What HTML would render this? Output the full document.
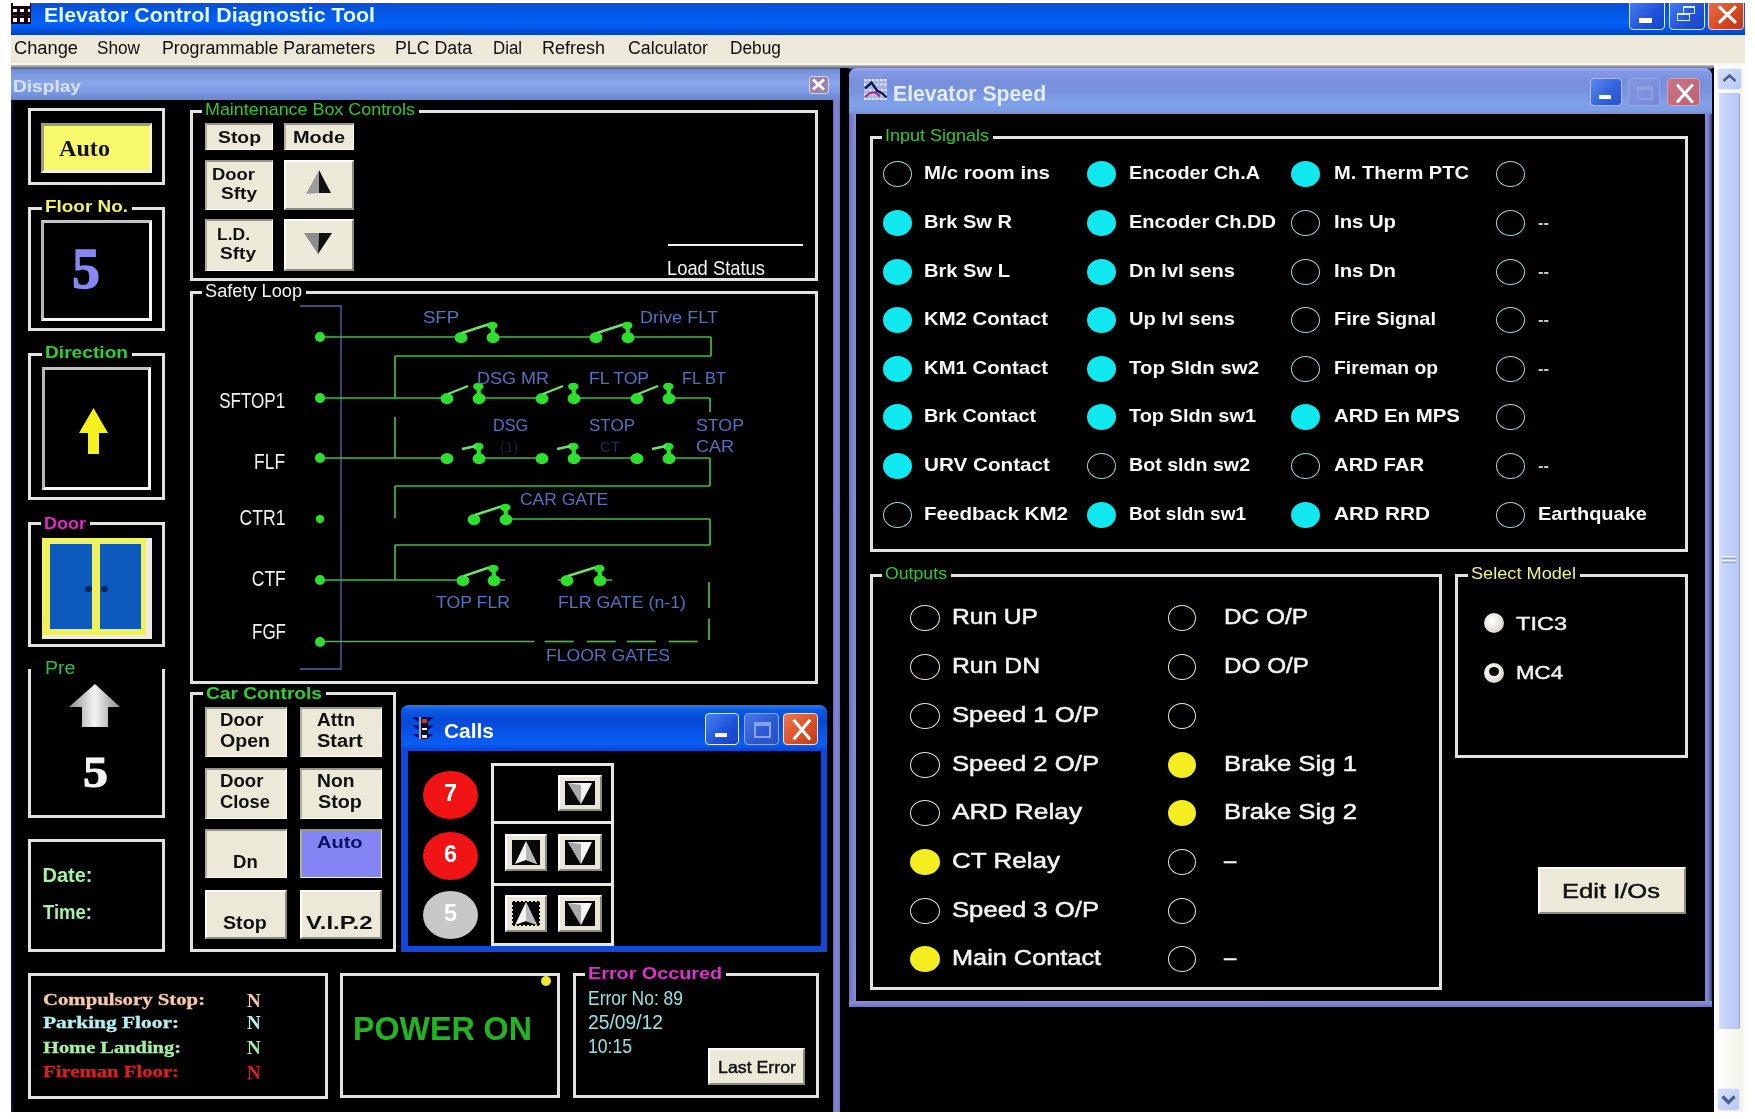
<!DOCTYPE html>
<html><head><meta charset="utf-8"><title>Elevator Control Diagnostic Tool</title>
<style>
html,body{margin:0;padding:0;background:#fff;}
body{width:1755px;height:1119px;position:relative;overflow:hidden;font-family:"Liberation Sans",sans-serif;}
#root{position:absolute;left:0;top:0;width:1755px;height:1119px;overflow:hidden;filter:blur(0.6px);}
#root div{position:absolute;}
.t{white-space:nowrap;}
</style></head><body><div id="root">
<div style="left:11px;top:3px;width:1734px;height:32px;background:linear-gradient(#0a50d4 0%,#0656e2 28%,#0362f8 62%,#0452e0 84%,#033eb8 100%);"></div>
<div style="left:11px;top:3px;width:20px;height:21px;background:#14040a;"></div>
<div style="left:13px;top:3px;width:17px;height:3px;background:#fff;"></div>
<div style="left:13.2px;top:8.5px;width:3.6px;height:3.8px;background:#f6f2f4;"></div>
<div style="left:20.3px;top:8.5px;width:3.8px;height:3.8px;background:#f6f2f4;"></div>
<div style="left:27.6px;top:8.5px;width:2.6px;height:3.8px;background:#f6f2f4;"></div>
<div style="left:13.2px;top:18px;width:3.6px;height:3.8px;background:#f6f2f4;"></div>
<div style="left:20.3px;top:18px;width:3.8px;height:3.8px;background:#f6f2f4;"></div>
<div style="left:27.6px;top:18px;width:2.6px;height:3.8px;background:#f6f2f4;"></div>
<div style="left:13.2px;top:14.6px;width:3.6px;height:1px;background:#4a3040;"></div>
<div style="left:20.3px;top:14.6px;width:3.8px;height:1px;background:#4a3040;"></div>
<div style="left:27.6px;top:14.6px;width:2.6px;height:1px;background:#4a3040;"></div>
<div class="t" style="left:44px;top:3.0px;font:700 20px/24px 'Liberation Sans',sans-serif;color:#e2fbfb;transform:scaleX(1.069);transform-origin:left center;">Elevator Control Diagnostic Tool</div>
<div style="left:1629px;top:0px;width:36px;height:30px;background:linear-gradient(135deg,#4a7ef0,#1e52d8 60%,#1846c0);border:1.5px solid #d8f0f8;border-radius:4px;box-sizing:border-box;opacity:1;overflow:hidden;"><div style="left:9.0px;top:17.4px;width:13.0px;height:4.2px;background:#fff;"></div></div>
<div style="left:1669px;top:0px;width:36px;height:30px;background:linear-gradient(135deg,#4a7ef0,#1e52d8 60%,#1846c0);border:1.5px solid #d8f0f8;border-radius:4px;box-sizing:border-box;opacity:1;overflow:hidden;"><div style="left:12.6px;top:5px;width:12px;height:7.5px;box-sizing:border-box;border:1.8px solid #d8f4f8;border-top-width:2.6px;"></div><div style="left:7.3px;top:11.5px;width:12.7px;height:8.5px;box-sizing:border-box;border:1.8px solid #d8f4f8;border-top-width:2.6px;"></div></div>
<div style="left:1708px;top:0px;width:36px;height:30px;background:linear-gradient(135deg,#e8704a,#d84a20 55%,#b83a18);border:1.5px solid #f4d8d0;border-radius:4px;box-sizing:border-box;opacity:1;overflow:hidden;"><svg style="position:absolute;left:0;top:0" width="36" height="30" viewBox="0 0 36 30"><path d="M9.7 5.4 L27.0 21.9 M27.0 5.4 L9.7 21.9" stroke="#fff" stroke-width="3.2" stroke-linecap="butt"/></svg></div>
<div style="left:0px;top:0px;width:1755px;height:3px;background:#fff;"></div>
<div style="left:11px;top:35px;width:1734px;height:29px;background:#ece9d8;"></div>
<div style="left:11px;top:63px;width:1734px;height:2px;background:#f8f6ee;"></div>
<div style="left:11px;top:65px;width:1703px;height:3px;background:linear-gradient(#c8c4b0,#6a6f86);"></div>
<div class="t" style="left:14px;top:37.0px;font:400 18px/22px 'Liberation Sans',sans-serif;color:#101010;transform:scaleX(1.015);transform-origin:left center;">Change</div>
<div class="t" style="left:97px;top:37.0px;font:400 18px/22px 'Liberation Sans',sans-serif;color:#101010;transform:scaleX(0.955);transform-origin:left center;">Show</div>
<div class="t" style="left:162px;top:37.0px;font:400 18px/22px 'Liberation Sans',sans-serif;color:#101010;transform:scaleX(0.986);transform-origin:left center;">Programmable Parameters</div>
<div class="t" style="left:395px;top:37.0px;font:400 18px/22px 'Liberation Sans',sans-serif;color:#101010;transform:scaleX(0.987);transform-origin:left center;">PLC Data</div>
<div class="t" style="left:493px;top:37.0px;font:400 18px/22px 'Liberation Sans',sans-serif;color:#101010;transform:scaleX(0.935);transform-origin:left center;">Dial</div>
<div class="t" style="left:542px;top:37.0px;font:400 18px/22px 'Liberation Sans',sans-serif;color:#101010;transform:scaleX(1.000);transform-origin:left center;">Refresh</div>
<div class="t" style="left:628px;top:37.0px;font:400 18px/22px 'Liberation Sans',sans-serif;color:#101010;transform:scaleX(0.987);transform-origin:left center;">Calculator</div>
<div class="t" style="left:730px;top:37.0px;font:400 18px/22px 'Liberation Sans',sans-serif;color:#101010;transform:scaleX(0.961);transform-origin:left center;">Debug</div>
<div style="left:11px;top:68px;width:1703px;height:1044px;background:#000;"></div>
<div style="left:1714px;top:66px;width:31px;height:1046px;background:#fbfaf4;"></div>
<div style="left:1715px;top:68px;width:28px;height:1044px;background:linear-gradient(90deg,#fefefe,#f3f1e8);"></div>
<div style="left:1717px;top:93px;width:23px;height:936px;background:linear-gradient(90deg,#d4defa,#c0d0f8 40%,#b8c8f4);border-left:2px solid #f4f7ff;border-right:1px solid #98a8d8;box-sizing:border-box;border-radius:2px;"></div>
<div style="left:1722px;top:556px;width:14px;height:1px;background:#eef4ff;"></div>
<div style="left:1722px;top:558px;width:14px;height:1px;background:#8ea4d8;"></div>
<div style="left:1722px;top:560px;width:14px;height:1px;background:#eef4ff;"></div>
<div style="left:1722px;top:562px;width:14px;height:1px;background:#8ea4d8;"></div>
<div style="left:1717px;top:68px;width:25px;height:22px;background:linear-gradient(135deg,#d6e0fa,#b8c8f4);border-radius:3px;border:1px solid #e8eefc;box-sizing:border-box;"><svg style="position:absolute;left:0;top:0" width="23" height="20"><path d="M5.5 12 L11.5 6.5 L17.5 12" stroke="#4a5f98" stroke-width="2.6" fill="none"/></svg></div>
<div style="left:1717px;top:1088px;width:23px;height:23px;background:linear-gradient(135deg,#d6e0fa,#b8c8f4);border-radius:3px;border:1px solid #e8eefc;box-sizing:border-box;"><svg style="position:absolute;left:0;top:0" width="21" height="21"><path d="M4.5 7.5 L10.5 13.5 L16.5 7.5" stroke="#4a5f98" stroke-width="3.2" fill="none"/></svg></div>
<div style="left:11px;top:68px;width:829px;height:32px;background:linear-gradient(#6f89d6 0%,#7e9be2 25%,#8aa6ea 50%,#7b98e0 75%,#6a84d2 100%);"></div>
<div style="left:11px;top:68px;width:1703px;height:1px;background:#5b648c;"></div>
<div class="t" style="left:13px;top:75.5px;font:700 17px/21px 'Liberation Sans',sans-serif;color:#d4e2fa;transform:scaleX(1.124);transform-origin:left center;">Display</div>
<div style="left:809px;top:76px;width:20px;height:18px;border:1.5px solid #d4d4f8;box-sizing:border-box;border-radius:3px;background:#9a84a8;"><svg style="position:absolute;left:0;top:0" width="17" height="15"><path d="M3 2.5 L14 12.5 M14 2.5 L3 12.5" stroke="#fdf4fb" stroke-width="3"/></svg></div>
<div style="left:833px;top:100px;width:7px;height:1012px;background:linear-gradient(90deg,#6a70b8,#8088d4 50%,#6c74c0);"></div>
<div style="left:11px;top:100px;width:2px;height:1012px;background:#0a1048;"></div>
<div style="left:840px;top:68px;width:9px;height:1044px;background:#000;"></div>
<div style="left:28px;top:108px;width:137px;height:77px;border:3px solid;border-color:#e2e2e2;box-sizing:border-box;"></div>
<div style="left:41px;top:123px;width:111px;height:50px;background:#f8f86c;border:3px solid #9c9c74;border-right-color:#f4f4c8;border-bottom-color:#f4f4c8;box-sizing:border-box;"></div>
<div class="t" style="left:59px;top:134.5px;font:700 23px/27px 'Liberation Serif',serif;color:#141420;transform:scaleX(1.050);transform-origin:left center;">Auto</div>
<div style="left:28px;top:207px;width:137px;height:124px;border:3px solid;border-color:#e2e2e2;box-sizing:border-box;"></div>
<div style="left:42px;top:204px;width:90px;height:8px;background:#000;"></div>
<div class="t" style="left:45px;top:195.5px;font:700 17px/21px 'Liberation Sans',sans-serif;color:#f4f45c;transform:scaleX(1.113);transform-origin:left center;">Floor No.</div>
<div style="left:41px;top:220px;width:111px;height:101px;border:3px solid;border-color:#c2c2c2 #f6f6f6 #f6f6f6 #b8b8b8;box-sizing:border-box;"></div>
<div class="t" style="left:71.5px;top:238.0px;font:700 58px/62px 'Liberation Serif',serif;color:#8888f2;transform:scaleX(0.966);transform-origin:left center;-webkit-text-stroke:1.3px #8888f2;">5</div>
<div style="left:28px;top:353px;width:137px;height:147px;border:3px solid;border-color:#e2e2e2;box-sizing:border-box;"></div>
<div style="left:42px;top:350px;width:90px;height:8px;background:#000;"></div>
<div class="t" style="left:45px;top:341.5px;font:700 17px/21px 'Liberation Sans',sans-serif;color:#2ed02e;transform:scaleX(1.127);transform-origin:left center;">Direction</div>
<div style="left:42px;top:367px;width:109px;height:123px;border:3px solid;border-color:#c2c2c2 #f6f6f6 #f6f6f6 #b8b8b8;box-sizing:border-box;"></div>
<svg style="position:absolute;left:70px;top:400px" width="50" height="62"><path d="M23.5 8 L38 33 L29 33 L29 54 L18 54 L18 33 L9 33 Z" fill="#f4f020"/></svg>
<div style="left:28px;top:522px;width:137px;height:125px;border:3px solid;border-color:#e2e2e2;box-sizing:border-box;"></div>
<div style="left:41px;top:519px;width:49px;height:8px;background:#000;"></div>
<div class="t" style="left:44px;top:512.5px;font:700 17px/21px 'Liberation Sans',sans-serif;color:#e428c4;transform:scaleX(1.059);transform-origin:left center;">Door</div>
<div style="left:42px;top:537.5px;width:109.5px;height:101.5px;background:#ecece4;"></div>
<div style="left:42px;top:537.5px;width:104px;height:97.5px;background:#f0f05c;"></div>
<div style="left:50.2px;top:544.2px;width:41.5px;height:85px;background:#0c5abc;"></div>
<div style="left:100.4px;top:544.2px;width:41px;height:85px;background:#0c5abc;"></div>
<div style="left:85px;top:585.5px;width:6.5px;height:6px;background:#082458;border-radius:50%;"></div>
<div style="left:101px;top:585.5px;width:6.5px;height:6px;background:#082458;border-radius:50%;"></div>
<div style="left:28px;top:669px;width:137px;height:149px;border:3px solid;border-color:#e2e2e2;box-sizing:border-box;border-top-color:transparent;"></div>
<div style="left:28px;top:660px;width:138px;height:12px;background:#000;"></div>
<div style="left:28px;top:669px;width:3px;height:4px;background:#e4e4e4;"></div>
<div style="left:162px;top:669px;width:3px;height:4px;background:#e4e4e4;"></div>
<div class="t" style="left:45px;top:657.0px;font:400 18px/22px 'Liberation Sans',sans-serif;color:#3cb83c;transform:scaleX(1.089);transform-origin:left center;">Pre</div>
<svg style="position:absolute;left:64px;top:680px" width="62" height="52"><defs><linearGradient id="ga" x1="0" x2="1"><stop offset="0" stop-color="#8c8c8c"/><stop offset="0.5" stop-color="#f4f4f4"/><stop offset="1" stop-color="#8c8c8c"/></linearGradient></defs><path d="M31 4 L56 27 L44 27 L44 47 L18 47 L18 27 L5 27 Z" fill="url(#ga)"/></svg>
<div class="t" style="left:83px;top:747.5px;font:700 45px/49px 'Liberation Serif',serif;color:#f4f4f4;transform:scaleX(1.111);transform-origin:left center;-webkit-text-stroke:1px #f4f4f4;">5</div>
<div style="left:28px;top:839px;width:137px;height:113px;border:3px solid;border-color:#e2e2e2;box-sizing:border-box;"></div>
<div class="t" style="left:42.5px;top:862.5px;font:700 20px/24px 'Liberation Sans',sans-serif;color:#a4f0a4;transform:scaleX(1.000);transform-origin:left center;">Date:</div>
<div class="t" style="left:42.5px;top:899.5px;font:700 20px/24px 'Liberation Sans',sans-serif;color:#a4f0a4;transform:scaleX(0.925);transform-origin:left center;">Time:</div>
<div style="left:190px;top:110px;width:628px;height:171px;border:3px solid;border-color:#e2e2e2;box-sizing:border-box;"></div>
<div style="left:202px;top:107px;width:217px;height:8px;background:#000;"></div>
<div class="t" style="left:205px;top:98.5px;font:400 17px/21px 'Liberation Sans',sans-serif;color:#30c830;transform:scaleX(1.053);transform-origin:left center;">Maintenance Box Controls</div>
<div style="left:205px;top:123px;width:68px;height:27px;background:#ece9d8;border-top:2px solid #96948a;border-left:2px solid #b0ae9e;border-right:1px solid #fbfbf2;border-bottom:1px solid #fbfbf2;box-sizing:border-box;"></div>
<div class="t" style="left:217.5px;top:126.5px;font:700 17px/21px 'Liberation Sans',sans-serif;color:#101010;transform:scaleX(1.139);transform-origin:left center;">Stop</div>
<div style="left:284px;top:123px;width:70px;height:27px;background:#ece9d8;border-top:2px solid #96948a;border-left:2px solid #b0ae9e;border-right:1px solid #fbfbf2;border-bottom:1px solid #fbfbf2;box-sizing:border-box;"></div>
<div class="t" style="left:293.0px;top:126.5px;font:700 17px/21px 'Liberation Sans',sans-serif;color:#101010;transform:scaleX(1.172);transform-origin:left center;">Mode</div>
<div style="left:205px;top:160px;width:68px;height:50px;background:#ece9d8;border-top:2px solid #96948a;border-left:2px solid #b0ae9e;border-right:1px solid #fbfbf2;border-bottom:1px solid #fbfbf2;box-sizing:border-box;"></div>
<div class="t" style="left:212px;top:163.5px;font:700 17px/21px 'Liberation Sans',sans-serif;color:#101010;transform:scaleX(1.084);transform-origin:left center;">Door</div>
<div class="t" style="left:220.5px;top:182.5px;font:700 17px/21px 'Liberation Sans',sans-serif;color:#101010;transform:scaleX(1.121);transform-origin:left center;">Sfty</div>
<div style="left:284px;top:160px;width:70px;height:50px;background:#ece9d8;border-top:2px solid #fdfdf6;border-left:2px solid #fdfdf6;border-right:2px solid #8c8a7c;border-bottom:2px solid #8c8a7c;box-sizing:border-box;"></div>
<div style="left:205px;top:219px;width:68px;height:52px;background:#ece9d8;border-top:2px solid #96948a;border-left:2px solid #b0ae9e;border-right:1px solid #fbfbf2;border-bottom:1px solid #fbfbf2;box-sizing:border-box;"></div>
<div class="t" style="left:217px;top:223.5px;font:700 17px/21px 'Liberation Sans',sans-serif;color:#101010;transform:scaleX(1.028);transform-origin:left center;">L.D.</div>
<div class="t" style="left:220px;top:242.5px;font:700 17px/21px 'Liberation Sans',sans-serif;color:#101010;transform:scaleX(1.121);transform-origin:left center;">Sfty</div>
<div style="left:284px;top:219px;width:70px;height:52px;background:#ece9d8;border-top:2px solid #fdfdf6;border-left:2px solid #fdfdf6;border-right:2px solid #8c8a7c;border-bottom:2px solid #8c8a7c;box-sizing:border-box;"></div>
<svg style="position:absolute;left:300px;top:166px" width="40" height="40"><path d="M19 4 L6 28 L19 27 Z" fill="#9c9c9c"/><path d="M19 4 L31 27 L19 27 Z" fill="#101010"/></svg>
<svg style="position:absolute;left:300px;top:228px" width="40" height="40"><path d="M4 5 L19 5 L18 26 Z" fill="#8c8c8c"/><path d="M19 5 L32 5 L18 26 Z" fill="#101010"/></svg>
<div style="left:668px;top:244px;width:135px;height:2px;background:#f0f0f0;"></div>
<div class="t" style="left:667.4px;top:255.0px;font:400 21px/25px 'Liberation Sans',sans-serif;color:#f4f4f4;transform:scaleX(0.874);transform-origin:left center;">Load Status</div>
<div style="left:190px;top:291px;width:628px;height:393px;border:3px solid;border-color:#e2e2e2;box-sizing:border-box;"></div>
<div style="left:202px;top:288px;width:104px;height:8px;background:#000;"></div>
<div class="t" style="left:205px;top:280.0px;font:400 18px/22px 'Liberation Sans',sans-serif;color:#f4f4f4;transform:scaleX(1.010);transform-origin:left center;">Safety Loop</div>
<svg style="position:absolute;left:0;top:0" width="1755" height="1119"><path d="M300 306 L341 306 L341 669 L300 669" stroke="#5068a8" stroke-width="1.3" fill="none"/><path d="M320 337 L711 337" stroke="#40bc40" stroke-width="1.7" fill="none"/><path d="M711 337 L711 356" stroke="#40bc40" stroke-width="1.7" fill="none"/><path d="M395 356 L711 356" stroke="#40bc40" stroke-width="1.7" fill="none"/><path d="M395 356 L395 398" stroke="#40bc40" stroke-width="1.7" fill="none"/><path d="M320 398 L710 398" stroke="#40bc40" stroke-width="1.7" fill="none"/><path d="M710 398 L710 412" stroke="#40bc40" stroke-width="1.7" fill="none"/><path d="M395 417 L395 458" stroke="#40bc40" stroke-width="1.7" fill="none"/><path d="M320 458 L710 458" stroke="#40bc40" stroke-width="1.7" fill="none"/><path d="M710 458 L710 486" stroke="#40bc40" stroke-width="1.7" fill="none"/><path d="M395 486 L710 486" stroke="#40bc40" stroke-width="1.7" fill="none"/><path d="M395 486 L395 518" stroke="#40bc40" stroke-width="1.7" fill="none"/><path d="M507 519 L710 519" stroke="#40bc40" stroke-width="1.7" fill="none"/><path d="M710 519 L710 545" stroke="#40bc40" stroke-width="1.7" fill="none"/><path d="M395 545 L710 545" stroke="#40bc40" stroke-width="1.7" fill="none"/><path d="M395 545 L395 580" stroke="#40bc40" stroke-width="1.7" fill="none"/><path d="M320 580 L505 580" stroke="#40bc40" stroke-width="1.7" fill="none"/><path d="M558 580 L612 580" stroke="#40bc40" stroke-width="1.7" fill="none"/><path d="M709 582 L709 608" stroke="#40bc40" stroke-width="1.7" fill="none"/><path d="M709 618.5 L709 640" stroke="#40bc40" stroke-width="1.7" fill="none"/><path d="M320 641.5 L534.5 641.5" stroke="#40bc40" stroke-width="1.7" fill="none"/><path d="M544.6 641.5 L573.6 641.5" stroke="#40bc40" stroke-width="1.7" fill="none"/><path d="M586.7 641.5 L615.7 641.5" stroke="#40bc40" stroke-width="1.7" fill="none"/><path d="M626.7 641.5 L655.7 641.5" stroke="#40bc40" stroke-width="1.7" fill="none"/><path d="M668.7 641.5 L697.7 641.5" stroke="#40bc40" stroke-width="1.7" fill="none"/><circle cx="320" cy="337" r="5" fill="#2ee02e"/><circle cx="320" cy="398" r="5" fill="#2ee02e"/><circle cx="320" cy="458" r="5" fill="#2ee02e"/><circle cx="320" cy="519" r="4" fill="#2ee02e"/><circle cx="320" cy="580" r="5" fill="#2ee02e"/><circle cx="320" cy="642" r="5" fill="#2ee02e"/><path d="M466 337 L488 337" stroke="#000" stroke-width="3.4"/><ellipse cx="461" cy="337.6" rx="6.4" ry="5.6" fill="#2ee02e"/><ellipse cx="493" cy="337.6" rx="6.4" ry="5.6" fill="#2ee02e"/><ellipse cx="492.3" cy="325.5" rx="5.2" ry="3.8" fill="#2ee02e"/><path d="M492.5 327 L493 335" stroke="#2ee02e" stroke-width="4.2"/><path d="M462 333 L488 324.5" stroke="#6ee06e" stroke-width="2.4" fill="none"/><path d="M601 337 L623 337" stroke="#000" stroke-width="3.4"/><ellipse cx="596" cy="337.6" rx="6.4" ry="5.6" fill="#2ee02e"/><ellipse cx="628" cy="337.6" rx="6.4" ry="5.6" fill="#2ee02e"/><ellipse cx="627.3" cy="325.5" rx="5.2" ry="3.8" fill="#2ee02e"/><path d="M627.5 327 L628 335" stroke="#2ee02e" stroke-width="4.2"/><path d="M597 333 L623 324.5" stroke="#6ee06e" stroke-width="2.4" fill="none"/><path d="M452 398 L474 398" stroke="#000" stroke-width="3.4"/><ellipse cx="447" cy="398.6" rx="6.4" ry="5.6" fill="#2ee02e"/><ellipse cx="479" cy="398.6" rx="6.4" ry="5.6" fill="#2ee02e"/><ellipse cx="478.3" cy="386.5" rx="5.2" ry="3.8" fill="#2ee02e"/><path d="M478.5 388 L479 396" stroke="#2ee02e" stroke-width="4.2"/><path d="M448 394 L468 386" stroke="#6ee06e" stroke-width="2.4" fill="none"/><path d="M452 458 L474 458" stroke="#000" stroke-width="3.4"/><ellipse cx="447" cy="458.6" rx="6.4" ry="5.6" fill="#2ee02e"/><ellipse cx="479" cy="458.6" rx="6.4" ry="5.6" fill="#2ee02e"/><ellipse cx="478.3" cy="446.5" rx="5.2" ry="3.8" fill="#2ee02e"/><path d="M478.5 448 L479 456" stroke="#2ee02e" stroke-width="4.2"/><path d="M462 449 L476 446" stroke="#6ee06e" stroke-width="2.4" fill="none"/><path d="M547 398 L569 398" stroke="#000" stroke-width="3.4"/><ellipse cx="542" cy="398.6" rx="6.4" ry="5.6" fill="#2ee02e"/><ellipse cx="574" cy="398.6" rx="6.4" ry="5.6" fill="#2ee02e"/><ellipse cx="573.3" cy="386.5" rx="5.2" ry="3.8" fill="#2ee02e"/><path d="M573.5 388 L574 396" stroke="#2ee02e" stroke-width="4.2"/><path d="M543 394 L563 386" stroke="#6ee06e" stroke-width="2.4" fill="none"/><path d="M547 458 L569 458" stroke="#000" stroke-width="3.4"/><ellipse cx="542" cy="458.6" rx="6.4" ry="5.6" fill="#2ee02e"/><ellipse cx="574" cy="458.6" rx="6.4" ry="5.6" fill="#2ee02e"/><ellipse cx="573.3" cy="446.5" rx="5.2" ry="3.8" fill="#2ee02e"/><path d="M573.5 448 L574 456" stroke="#2ee02e" stroke-width="4.2"/><path d="M557 449 L571 446" stroke="#6ee06e" stroke-width="2.4" fill="none"/><path d="M642 398 L664 398" stroke="#000" stroke-width="3.4"/><ellipse cx="637" cy="398.6" rx="6.4" ry="5.6" fill="#2ee02e"/><ellipse cx="669" cy="398.6" rx="6.4" ry="5.6" fill="#2ee02e"/><ellipse cx="668.3" cy="386.5" rx="5.2" ry="3.8" fill="#2ee02e"/><path d="M668.5 388 L669 396" stroke="#2ee02e" stroke-width="4.2"/><path d="M638 394 L658 386" stroke="#6ee06e" stroke-width="2.4" fill="none"/><path d="M642 458 L664 458" stroke="#000" stroke-width="3.4"/><ellipse cx="637" cy="458.6" rx="6.4" ry="5.6" fill="#2ee02e"/><ellipse cx="669" cy="458.6" rx="6.4" ry="5.6" fill="#2ee02e"/><ellipse cx="668.3" cy="446.5" rx="5.2" ry="3.8" fill="#2ee02e"/><path d="M668.5 448 L669 456" stroke="#2ee02e" stroke-width="4.2"/><path d="M652 449 L666 446" stroke="#6ee06e" stroke-width="2.4" fill="none"/><path d="M479 519 L501 519" stroke="#000" stroke-width="3.4"/><ellipse cx="474" cy="519.6" rx="6.4" ry="5.6" fill="#2ee02e"/><ellipse cx="506" cy="519.6" rx="6.4" ry="5.6" fill="#2ee02e"/><ellipse cx="505.3" cy="507.5" rx="5.2" ry="3.8" fill="#2ee02e"/><path d="M505.5 509 L506 517" stroke="#2ee02e" stroke-width="4.2"/><path d="M475 515 L501 506.5" stroke="#6ee06e" stroke-width="2.4" fill="none"/><path d="M468 580 L489 580" stroke="#000" stroke-width="3.4"/><ellipse cx="463" cy="580.6" rx="6.4" ry="5.6" fill="#2ee02e"/><ellipse cx="494" cy="580.6" rx="6.4" ry="5.6" fill="#2ee02e"/><ellipse cx="493.3" cy="568.5" rx="5.2" ry="3.8" fill="#2ee02e"/><path d="M493.5 570 L494 578" stroke="#2ee02e" stroke-width="4.2"/><path d="M464 576 L489 567.5" stroke="#6ee06e" stroke-width="2.4" fill="none"/><path d="M572 580 L595 580" stroke="#000" stroke-width="3.4"/><ellipse cx="567" cy="580.6" rx="6.4" ry="5.6" fill="#2ee02e"/><ellipse cx="600" cy="580.6" rx="6.4" ry="5.6" fill="#2ee02e"/><ellipse cx="599.3" cy="568.5" rx="5.2" ry="3.8" fill="#2ee02e"/><path d="M599.5 570 L600 578" stroke="#2ee02e" stroke-width="4.2"/><path d="M568 576 L595 567.5" stroke="#6ee06e" stroke-width="2.4" fill="none"/></svg>
<div class="t" style="right:1469.5px;top:388.0px;font:400 22px/26px 'Liberation Sans',sans-serif;color:#f0f0f0;transform:scaleX(0.775);transform-origin:right center;">SFTOP1</div>
<div class="t" style="right:1469.5px;top:448.5px;font:400 22px/26px 'Liberation Sans',sans-serif;color:#f0f0f0;transform:scaleX(0.793);transform-origin:right center;">FLF</div>
<div class="t" style="right:1469.5px;top:505.0px;font:400 22px/26px 'Liberation Sans',sans-serif;color:#f0f0f0;transform:scaleX(0.801);transform-origin:right center;">CTR1</div>
<div class="t" style="right:1469.5px;top:566.0px;font:400 22px/26px 'Liberation Sans',sans-serif;color:#f0f0f0;transform:scaleX(0.795);transform-origin:right center;">CTF</div>
<div class="t" style="right:1469.5px;top:619.0px;font:400 22px/26px 'Liberation Sans',sans-serif;color:#f0f0f0;transform:scaleX(0.773);transform-origin:right center;">FGF</div>
<div class="t" style="left:423px;top:306.5px;font:400 17px/21px 'Liberation Sans',sans-serif;color:#5272c2;transform:scaleX(1.089);transform-origin:left center;">SFP</div>
<div class="t" style="left:640px;top:306.5px;font:400 17px/21px 'Liberation Sans',sans-serif;color:#5272c2;transform:scaleX(1.063);transform-origin:left center;">Drive FLT</div>
<div class="t" style="left:477px;top:367.5px;font:400 17px/21px 'Liberation Sans',sans-serif;color:#5272c2;transform:scaleX(1.059);transform-origin:left center;">DSG MR</div>
<div class="t" style="left:589px;top:367.5px;font:400 17px/21px 'Liberation Sans',sans-serif;color:#5272c2;transform:scaleX(1.030);transform-origin:left center;">FL TOP</div>
<div class="t" style="left:682px;top:367.5px;font:400 17px/21px 'Liberation Sans',sans-serif;color:#5272c2;transform:scaleX(0.964);transform-origin:left center;">FL BT</div>
<div class="t" style="left:493px;top:414.5px;font:400 17px/21px 'Liberation Sans',sans-serif;color:#5272c2;transform:scaleX(0.950);transform-origin:left center;">DSG</div>
<div class="t" style="left:589px;top:414.5px;font:400 17px/21px 'Liberation Sans',sans-serif;color:#5272c2;transform:scaleX(1.000);transform-origin:left center;">STOP</div>
<div class="t" style="left:696px;top:414.5px;font:400 17px/21px 'Liberation Sans',sans-serif;color:#5272c2;transform:scaleX(1.044);transform-origin:left center;">STOP</div>
<div class="t" style="left:696px;top:435.5px;font:400 17px/21px 'Liberation Sans',sans-serif;color:#5272c2;transform:scaleX(1.059);transform-origin:left center;">CAR</div>
<div class="t" style="left:520px;top:488.5px;font:400 17px/21px 'Liberation Sans',sans-serif;color:#5272c2;transform:scaleX(1.028);transform-origin:left center;">CAR GATE</div>
<div class="t" style="left:436px;top:591.5px;font:400 17px/21px 'Liberation Sans',sans-serif;color:#5272c2;transform:scaleX(1.040);transform-origin:left center;">TOP FLR</div>
<div class="t" style="left:558px;top:591.5px;font:400 17px/21px 'Liberation Sans',sans-serif;color:#5272c2;transform:scaleX(1.045);transform-origin:left center;">FLR GATE (n-1)</div>
<div class="t" style="left:546px;top:644.5px;font:400 17px/21px 'Liberation Sans',sans-serif;color:#5272c2;transform:scaleX(1.036);transform-origin:left center;">FLOOR GATES</div>
<div class="t" style="left:600px;top:436.5px;font:400 15px/19px 'Liberation Sans',sans-serif;color:#1c2a58;">CT</div>
<div class="t" style="left:500px;top:436.5px;font:400 15px/19px 'Liberation Sans',sans-serif;color:#141c3c;">(1)</div>
<div style="left:190px;top:692px;width:206px;height:260px;border:3px solid;border-color:#e2e2e2;box-sizing:border-box;"></div>
<div style="left:203px;top:689px;width:123px;height:8px;background:#000;"></div>
<div class="t" style="left:206px;top:682.5px;font:700 17px/21px 'Liberation Sans',sans-serif;color:#2ed02e;transform:scaleX(1.127);transform-origin:left center;">Car Controls</div>
<div style="left:205px;top:707px;width:82px;height:50px;background:#ece9d8;border-top:2px solid #96948a;border-left:2px solid #b0ae9e;border-right:1px solid #fbfbf2;border-bottom:1px solid #fbfbf2;box-sizing:border-box;"></div>
<div class="t" style="left:219.7px;top:709.0px;font:700 18px/22px 'Liberation Sans',sans-serif;color:#101010;transform:scaleX(1.033);transform-origin:left center;">Door</div>
<div class="t" style="left:219.7px;top:730.0px;font:700 18px/22px 'Liberation Sans',sans-serif;color:#101010;transform:scaleX(1.087);transform-origin:left center;">Open</div>
<div style="left:300px;top:707px;width:82px;height:50px;background:#ece9d8;border-top:2px solid #96948a;border-left:2px solid #b0ae9e;border-right:1px solid #fbfbf2;border-bottom:1px solid #fbfbf2;box-sizing:border-box;"></div>
<div class="t" style="left:316.8px;top:709.0px;font:700 18px/22px 'Liberation Sans',sans-serif;color:#101010;transform:scaleX(1.056);transform-origin:left center;">Attn</div>
<div class="t" style="left:316.8px;top:730.0px;font:700 18px/22px 'Liberation Sans',sans-serif;color:#101010;transform:scaleX(1.112);transform-origin:left center;">Start</div>
<div style="left:205px;top:768px;width:82px;height:51px;background:#ece9d8;border-top:2px solid #96948a;border-left:2px solid #b0ae9e;border-right:1px solid #fbfbf2;border-bottom:1px solid #fbfbf2;box-sizing:border-box;"></div>
<div class="t" style="left:219.7px;top:770.0px;font:700 18px/22px 'Liberation Sans',sans-serif;color:#101010;transform:scaleX(1.033);transform-origin:left center;">Door</div>
<div class="t" style="left:219.7px;top:791.0px;font:700 18px/22px 'Liberation Sans',sans-serif;color:#101010;transform:scaleX(1.020);transform-origin:left center;">Close</div>
<div style="left:300px;top:768px;width:82px;height:51px;background:#ece9d8;border-top:2px solid #96948a;border-left:2px solid #b0ae9e;border-right:1px solid #fbfbf2;border-bottom:1px solid #fbfbf2;box-sizing:border-box;"></div>
<div class="t" style="left:316.8px;top:770.0px;font:700 18px/22px 'Liberation Sans',sans-serif;color:#101010;transform:scaleX(1.072);transform-origin:left center;">Non</div>
<div class="t" style="left:318px;top:791.0px;font:700 18px/22px 'Liberation Sans',sans-serif;color:#101010;transform:scaleX(1.095);transform-origin:left center;">Stop</div>
<div style="left:205px;top:829px;width:82px;height:49px;background:#ece9d8;border-top:2px solid #96948a;border-left:2px solid #b0ae9e;border-right:1px solid #fbfbf2;border-bottom:1px solid #fbfbf2;box-sizing:border-box;"></div>
<div class="t" style="left:233px;top:851.0px;font:700 18px/22px 'Liberation Sans',sans-serif;color:#101010;transform:scaleX(1.029);transform-origin:left center;">Dn</div>
<div style="left:300px;top:829px;width:82px;height:49px;background:#8484f4;border-top:2px solid #96948a;border-left:2px solid #b0ae9e;border-right:1px solid #fbfbf2;border-bottom:1px solid #fbfbf2;box-sizing:border-box;"></div>
<div class="t" style="left:316.8px;top:831.5px;font:700 17px/21px 'Liberation Sans',sans-serif;color:#0c1060;transform:scaleX(1.178);transform-origin:left center;">Auto</div>
<div style="left:205px;top:890px;width:82px;height:49px;background:#ece9d8;border-top:2px solid #fdfdf6;border-left:2px solid #fdfdf6;border-right:2px solid #8c8a7c;border-bottom:2px solid #8c8a7c;box-sizing:border-box;"></div>
<div class="t" style="left:223.4px;top:912.0px;font:700 18px/22px 'Liberation Sans',sans-serif;color:#101010;transform:scaleX(1.093);transform-origin:left center;">Stop</div>
<div style="left:300px;top:890px;width:82px;height:49px;background:#ece9d8;border-top:2px solid #fdfdf6;border-left:2px solid #fdfdf6;border-right:2px solid #8c8a7c;border-bottom:2px solid #8c8a7c;box-sizing:border-box;"></div>
<div class="t" style="left:306px;top:912.0px;font:700 18px/22px 'Liberation Sans',sans-serif;color:#101010;transform:scaleX(1.328);transform-origin:left center;">V.I.P.2</div>
<div style="left:401px;top:705px;width:426px;height:247px;background:#1348d8;border-radius:8px 8px 0 0;"></div>
<div style="left:401px;top:705px;width:426px;height:46px;background:linear-gradient(#2e78f2 0%,#0c58e2 12%,#064ad8 36%,#0858ec 68%,#0a5ef2 86%,#0844cc 100%);border-radius:8px 8px 0 0;"></div>
<div style="left:408px;top:751px;width:413px;height:195px;background:#000;"></div>
<div style="left:418.5px;top:717px;width:9.5px;height:22px;background:#0c0c14;"></div>
<div style="left:419px;top:717px;width:2px;height:22px;background:#9aa4c0;"></div>
<div style="left:422px;top:719px;width:5px;height:3.5px;background:#c83048;"></div>
<div style="left:422px;top:727.5px;width:5px;height:2.5px;background:#f4f4f4;"></div>
<div style="left:422px;top:735px;width:5px;height:2.5px;background:#e8e8e8;"></div>
<svg style="position:absolute;left:410px;top:715px" width="26" height="26"><g fill="#0a0a6c"><path d="M2 2 L8.5 2 L8.5 7 Z"/><path d="M2 10.5 L8.5 10.5 L8.5 15 Z"/><path d="M2 19 L8.5 19 L8.5 23 Z"/><path d="M24 2 L18 2 L18 7 Z"/><path d="M24 10.5 L18 10.5 L18 15 Z"/><path d="M24 19 L18 19 L18 23 Z"/></g></svg>
<div class="t" style="left:444px;top:719.0px;font:700 20px/24px 'Liberation Sans',sans-serif;color:#fff;transform:scaleX(1.046);transform-origin:left center;">Calls</div>
<div style="left:705px;top:713px;width:34px;height:32px;background:linear-gradient(135deg,#4a80f4,#1c50d8 60%,#1844c0);border:1.5px solid #e4eefc;border-radius:4px;box-sizing:border-box;opacity:1;overflow:hidden;"><div style="left:8.5px;top:18.6px;width:12.2px;height:4.5px;background:#fff;"></div></div>
<div style="left:744px;top:713px;width:35px;height:32px;background:linear-gradient(135deg,#4a78e8,#2c58d0 60%,#2a50c0);border:1.5px solid #88a8f0;border-radius:4px;box-sizing:border-box;opacity:1;overflow:hidden;"><div style="left:9.1px;top:7.7px;width:16.8px;height:16.0px;box-sizing:border-box;border:2px solid #86a4ec;border-top-width:4px;"></div></div>
<div style="left:783px;top:713px;width:35px;height:32px;background:linear-gradient(135deg,#ec7850,#dc5028 55%,#bc3c18);border:1.5px solid #f8e4dc;border-radius:4px;box-sizing:border-box;opacity:1;overflow:hidden;"><svg style="position:absolute;left:0;top:0" width="35" height="32" viewBox="0 0 35 32"><path d="M9.5 5.8 L26.2 25.6 M26.2 5.8 L9.5 25.6" stroke="#fff" stroke-width="3.1" stroke-linecap="butt"/></svg></div>
<div style="left:423px;top:771px;width:55px;height:48px;background:#f01414;border-radius:50%;"></div>
<div class="t" style="left:443.5px;top:779.0px;font:700 24px/28px 'Liberation Sans',sans-serif;color:#fff;transform:scaleX(0.974);transform-origin:left center;">7</div>
<div style="left:423px;top:832px;width:55px;height:48px;background:#f01414;border-radius:50%;"></div>
<div class="t" style="left:443.5px;top:840.0px;font:700 24px/28px 'Liberation Sans',sans-serif;color:#fff;transform:scaleX(0.974);transform-origin:left center;">6</div>
<div style="left:423px;top:891px;width:55px;height:48px;background:#c8c8c8;border-radius:50%;"></div>
<div class="t" style="left:443.5px;top:899.0px;font:700 24px/28px 'Liberation Sans',sans-serif;color:#fff;transform:scaleX(0.974);transform-origin:left center;">5</div>
<div style="left:491px;top:763px;width:123px;height:61px;border:3px solid #e8e8e0;box-sizing:border-box;"></div>
<div style="left:491px;top:821px;width:123px;height:65px;border:3px solid #e8e8e0;box-sizing:border-box;"></div>
<div style="left:491px;top:883px;width:123px;height:63px;border:3px solid #e8e8e0;box-sizing:border-box;"></div>
<div style="left:558px;top:775px;width:44px;height:36px;background:#e8e6d8;border-top:2px solid #fff;border-left:2px solid #fff;border-right:2px solid #8c8a7c;border-bottom:2px solid #8c8a7c;box-sizing:border-box;"></div>
<div style="left:565px;top:781px;width:30px;height:24px;background:#080808;"></div>
<svg style="position:absolute;left:565px;top:781px" width="30" height="24"><path d="M3 2 L27 2 L16.0 23 Z" fill="#f4f4f4"/><path d="M3 2 L16.0 4 L16.0 23 Z" fill="#a8a8a8"/></svg>
<div style="left:505px;top:834px;width:42px;height:37px;background:#e8e6d8;border-top:2px solid #fff;border-left:2px solid #fff;border-right:2px solid #8c8a7c;border-bottom:2px solid #8c8a7c;box-sizing:border-box;"></div>
<div style="left:512px;top:840px;width:28px;height:25px;background:#080808;"></div>
<svg style="position:absolute;left:512px;top:840px" width="28" height="25"><path d="M14.0 1 L25 24 L14.0 20 L3 24 Z" fill="#f4f4f4"/><path d="M14.0 1 L25 24 L14.0 20 Z" fill="#b8b8b8"/></svg>
<div style="left:558px;top:834px;width:44px;height:37px;background:#e8e6d8;border-top:2px solid #fff;border-left:2px solid #fff;border-right:2px solid #8c8a7c;border-bottom:2px solid #8c8a7c;box-sizing:border-box;"></div>
<div style="left:565px;top:840px;width:30px;height:25px;background:#080808;"></div>
<svg style="position:absolute;left:565px;top:840px" width="30" height="25"><path d="M3 2 L27 2 L16.0 24 Z" fill="#f4f4f4"/><path d="M3 2 L16.0 4 L16.0 24 Z" fill="#a8a8a8"/></svg>
<div style="left:505px;top:895px;width:42px;height:37px;background:#e8e6d8;border-top:2px solid #fff;border-left:2px solid #fff;border-right:2px solid #8c8a7c;border-bottom:2px solid #8c8a7c;box-sizing:border-box;"></div>
<div style="left:512px;top:901px;width:28px;height:25px;background:#080808;outline:2px dotted #e8e6d8;outline-offset:-1px;"></div>
<svg style="position:absolute;left:512px;top:901px" width="28" height="25"><path d="M14.0 1 L25 24 L14.0 20 L3 24 Z" fill="#f4f4f4"/><path d="M14.0 1 L25 24 L14.0 20 Z" fill="#b8b8b8"/></svg>
<div style="left:558px;top:895px;width:44px;height:37px;background:#e8e6d8;border-top:2px solid #fff;border-left:2px solid #fff;border-right:2px solid #8c8a7c;border-bottom:2px solid #8c8a7c;box-sizing:border-box;"></div>
<div style="left:565px;top:901px;width:30px;height:25px;background:#080808;"></div>
<svg style="position:absolute;left:565px;top:901px" width="30" height="25"><path d="M3 2 L27 2 L16.0 24 Z" fill="#f4f4f4"/><path d="M3 2 L16.0 4 L16.0 24 Z" fill="#a8a8a8"/></svg>
<div style="left:28px;top:972.5px;width:300px;height:126.5px;border:3px solid;border-color:#e2e2e2;box-sizing:border-box;"></div>
<div class="t" style="left:43px;top:989.0px;font:700 17px/21px 'Liberation Serif',serif;color:#f8c8a8;transform:scaleX(1.221);transform-origin:left center;-webkit-text-stroke:0.3px #f8c8a8;">Compulsory Stop:</div>
<div class="t" style="left:247px;top:988.5px;font:700 19px/23px 'Liberation Serif',serif;color:#f8c8a8;transform:scaleX(0.998);transform-origin:left center;">N</div>
<div class="t" style="left:43px;top:1011.5px;font:700 17px/21px 'Liberation Serif',serif;color:#b4f0f0;transform:scaleX(1.258);transform-origin:left center;-webkit-text-stroke:0.3px #b4f0f0;">Parking Floor:</div>
<div class="t" style="left:247px;top:1011.0px;font:700 19px/23px 'Liberation Serif',serif;color:#b4f0f0;transform:scaleX(0.998);transform-origin:left center;">N</div>
<div class="t" style="left:43px;top:1036.5px;font:700 17px/21px 'Liberation Serif',serif;color:#a4f0a4;transform:scaleX(1.202);transform-origin:left center;-webkit-text-stroke:0.3px #a4f0a4;">Home Landing:</div>
<div class="t" style="left:247px;top:1036.0px;font:700 19px/23px 'Liberation Serif',serif;color:#a4f0a4;transform:scaleX(0.998);transform-origin:left center;">N</div>
<div class="t" style="left:43px;top:1061.0px;font:700 17px/21px 'Liberation Serif',serif;color:#d82020;transform:scaleX(1.219);transform-origin:left center;-webkit-text-stroke:0.3px #d82020;">Fireman Floor:</div>
<div class="t" style="left:247px;top:1060.5px;font:700 19px/23px 'Liberation Serif',serif;color:#d82020;transform:scaleX(0.998);transform-origin:left center;">N</div>
<div style="left:340px;top:973px;width:220px;height:125px;border:3px solid;border-color:#e2e2e2;box-sizing:border-box;"></div>
<div class="t" style="left:353px;top:1009.5px;font:700 33px/37px 'Liberation Sans',sans-serif;color:#22b422;transform:scaleX(0.976);transform-origin:left center;">POWER ON</div>
<div style="left:541px;top:976px;width:10px;height:10px;background:#f0e830;border-radius:50%;"></div>
<div style="left:573px;top:973px;width:246px;height:125px;border:3px solid;border-color:#e2e2e2;box-sizing:border-box;"></div>
<div style="left:585px;top:970px;width:141px;height:8px;background:#000;"></div>
<div class="t" style="left:588px;top:962.5px;font:700 17px/21px 'Liberation Sans',sans-serif;color:#e030d0;transform:scaleX(1.163);transform-origin:left center;">Error Occured</div>
<div class="t" style="left:588px;top:985.5px;font:400 20px/24px 'Liberation Sans',sans-serif;color:#94e4e4;transform:scaleX(0.872);transform-origin:left center;">Error No: 89</div>
<div class="t" style="left:588px;top:1010.0px;font:400 20px/24px 'Liberation Sans',sans-serif;color:#94e4e4;transform:scaleX(0.963);transform-origin:left center;">25/09/12</div>
<div class="t" style="left:588px;top:1034.0px;font:400 20px/24px 'Liberation Sans',sans-serif;color:#94e4e4;transform:scaleX(0.879);transform-origin:left center;">10:15</div>
<div style="left:708px;top:1048px;width:97px;height:37px;background:#ece9d8;border-top:2px solid #fdfdf6;border-left:2px solid #fdfdf6;border-right:2px solid #8c8a7c;border-bottom:2px solid #8c8a7c;box-sizing:border-box;"></div>
<div class="t" style="left:717.5px;top:1056.5px;font:400 17px/21px 'Liberation Sans',sans-serif;color:#101010;transform:scaleX(1.045);transform-origin:left center;-webkit-text-stroke:0.45px #101010;">Last Error</div>
<div style="left:849px;top:68px;width:863px;height:939px;background:#7c84d0;border-radius:8px 8px 0 0;"></div>
<div style="left:849px;top:68px;width:863px;height:46px;background:linear-gradient(#9cacf0 0%,#8399e3 9%,#7890dc 28%,#7892de 52%,#80a2ea 78%,#7e9ee6 92%,#7888d4 100%);border-radius:8px 8px 0 0;"></div>
<div style="left:856px;top:114px;width:849px;height:887px;background:#000;"></div>
<div style="left:1705px;top:114px;width:7px;height:893px;background:linear-gradient(90deg,#8890d8,#7078c4 60%,#30346c);"></div>
<div style="left:849px;top:114px;width:7px;height:893px;background:linear-gradient(90deg,#6870bc,#8890d8);"></div>
<div style="left:849px;top:1001px;width:863px;height:6px;background:linear-gradient(#8890d8,#6c74c0);"></div>
<div style="left:1712px;top:68px;width:2px;height:1044px;background:#02030c;"></div>
<svg style="position:absolute;left:862px;top:77px" width="28" height="26" viewBox="0 0 28 26"><rect x="2" y="2" width="23" height="21" fill="#c8d0f4" opacity="0.55"/><g stroke="#f4f4fc" stroke-width="1.6" stroke-dasharray="2.4 1.6"><path d="M2 3 L25 3"/><path d="M2 7.5 L25 7.5"/><path d="M3 13 L25 13"/><path d="M2 17.5 L25 17.5"/><path d="M2 22 L25 22"/></g><path d="M3 11.5 L9.5 5.5 L15 13.5 L21 17 L24.5 20.5" stroke="#10184c" stroke-width="2.4" fill="none"/><path d="M3 20 L8 16 L13.5 15.5 L18 19.5" stroke="#a83088" stroke-width="2.2" fill="none"/></svg>
<div class="t" style="left:893px;top:81.0px;font:700 22px/26px 'Liberation Sans',sans-serif;color:#e4ecfa;transform:scaleX(0.963);transform-origin:left center;">Elevator Speed</div>
<div style="left:1590px;top:78px;width:32px;height:28px;background:linear-gradient(135deg,#5c88ec,#3060dc 60%,#2c54c8);border:1.5px solid #a8bcf0;border-radius:4px;box-sizing:border-box;opacity:1;overflow:hidden;"><div style="left:8.0px;top:16.2px;width:11.5px;height:3.9px;background:#fff;"></div></div>
<div style="left:1628px;top:78px;width:32px;height:28px;background:linear-gradient(135deg,#8498e0,#7488d8);border:1.5px solid #94a8e4;border-radius:4px;box-sizing:border-box;opacity:1;overflow:hidden;"><div style="left:8.3px;top:6.7px;width:15.4px;height:14.0px;box-sizing:border-box;border:2px solid #8ea0e2;border-top-width:4px;"></div></div>
<div style="left:1667px;top:78px;width:33px;height:28px;background:linear-gradient(135deg,#cc7484,#c06070);border:1.5px solid #d4a0b8;border-radius:4px;box-sizing:border-box;opacity:1;overflow:hidden;"><svg style="position:absolute;left:0;top:0" width="33" height="28" viewBox="0 0 33 28"><path d="M8.9 5.6 L24.8 23.5 M24.8 5.6 L8.9 23.5" stroke="#fff" stroke-width="3.0" stroke-linecap="butt"/></svg></div>
<div style="left:870px;top:136px;width:818px;height:416px;border:3px solid;border-color:#e2e2e2;box-sizing:border-box;"></div>
<div style="left:882px;top:133px;width:111px;height:8px;background:#000;"></div>
<div class="t" style="left:885px;top:124.5px;font:400 17px/21px 'Liberation Sans',sans-serif;color:#30c830;transform:scaleX(1.058);transform-origin:left center;">Input Signals</div>
<div style="left:882.5px;top:160.5px;width:29.0px;height:26px;border:1.4px solid #98d8d8;box-sizing:border-box;border-radius:50%;"></div>
<div class="t" style="left:924px;top:160.5px;font:700 19px/23px 'Liberation Sans',sans-serif;color:#f8f8f8;transform:scaleX(1.075);transform-origin:left center;">M/c room ins</div>
<div style="left:882.5px;top:209.5px;width:29.0px;height:26px;background:#10e8f0;border-radius:50%;"></div>
<div class="t" style="left:924px;top:209.5px;font:700 19px/23px 'Liberation Sans',sans-serif;color:#f8f8f8;transform:scaleX(1.055);transform-origin:left center;">Brk Sw R</div>
<div style="left:882.5px;top:258.5px;width:29.0px;height:26px;background:#10e8f0;border-radius:50%;"></div>
<div class="t" style="left:924px;top:258.5px;font:700 19px/23px 'Liberation Sans',sans-serif;color:#f8f8f8;transform:scaleX(1.058);transform-origin:left center;">Brk Sw L</div>
<div style="left:882.5px;top:307.0px;width:29.0px;height:26px;background:#10e8f0;border-radius:50%;"></div>
<div class="t" style="left:924px;top:307.0px;font:700 19px/23px 'Liberation Sans',sans-serif;color:#f8f8f8;transform:scaleX(1.068);transform-origin:left center;">KM2 Contact</div>
<div style="left:882.5px;top:355.5px;width:29.0px;height:26px;background:#10e8f0;border-radius:50%;"></div>
<div class="t" style="left:924px;top:355.5px;font:700 19px/23px 'Liberation Sans',sans-serif;color:#f8f8f8;transform:scaleX(1.068);transform-origin:left center;">KM1 Contact</div>
<div style="left:882.5px;top:404.0px;width:29.0px;height:26px;background:#10e8f0;border-radius:50%;"></div>
<div class="t" style="left:924px;top:404.0px;font:700 19px/23px 'Liberation Sans',sans-serif;color:#f8f8f8;transform:scaleX(1.040);transform-origin:left center;">Brk Contact</div>
<div style="left:882.5px;top:452.5px;width:29.0px;height:26px;background:#10e8f0;border-radius:50%;"></div>
<div class="t" style="left:924px;top:452.5px;font:700 19px/23px 'Liberation Sans',sans-serif;color:#f8f8f8;transform:scaleX(1.088);transform-origin:left center;">URV Contact</div>
<div style="left:882.5px;top:501.5px;width:29.0px;height:26px;border:1.4px solid #98d8d8;box-sizing:border-box;border-radius:50%;"></div>
<div class="t" style="left:924px;top:501.5px;font:700 19px/23px 'Liberation Sans',sans-serif;color:#f8f8f8;transform:scaleX(1.082);transform-origin:left center;">Feedback KM2</div>
<div style="left:1086.5px;top:160.5px;width:29.0px;height:26px;background:#10e8f0;border-radius:50%;"></div>
<div class="t" style="left:1129px;top:160.5px;font:700 19px/23px 'Liberation Sans',sans-serif;color:#f8f8f8;transform:scaleX(1.043);transform-origin:left center;">Encoder Ch.A</div>
<div style="left:1086.5px;top:209.5px;width:29.0px;height:26px;background:#10e8f0;border-radius:50%;"></div>
<div class="t" style="left:1129px;top:209.5px;font:700 19px/23px 'Liberation Sans',sans-serif;color:#f8f8f8;transform:scaleX(1.055);transform-origin:left center;">Encoder Ch.DD</div>
<div style="left:1086.5px;top:258.5px;width:29.0px;height:26px;background:#10e8f0;border-radius:50%;"></div>
<div class="t" style="left:1129px;top:258.5px;font:700 19px/23px 'Liberation Sans',sans-serif;color:#f8f8f8;transform:scaleX(1.057);transform-origin:left center;">Dn lvl sens</div>
<div style="left:1086.5px;top:307.0px;width:29.0px;height:26px;background:#10e8f0;border-radius:50%;"></div>
<div class="t" style="left:1129px;top:307.0px;font:700 19px/23px 'Liberation Sans',sans-serif;color:#f8f8f8;transform:scaleX(1.057);transform-origin:left center;">Up lvl sens</div>
<div style="left:1086.5px;top:355.5px;width:29.0px;height:26px;background:#10e8f0;border-radius:50%;"></div>
<div class="t" style="left:1129px;top:355.5px;font:700 19px/23px 'Liberation Sans',sans-serif;color:#f8f8f8;transform:scaleX(1.074);transform-origin:left center;">Top Sldn sw2</div>
<div style="left:1086.5px;top:404.0px;width:29.0px;height:26px;background:#10e8f0;border-radius:50%;"></div>
<div class="t" style="left:1129px;top:404.0px;font:700 19px/23px 'Liberation Sans',sans-serif;color:#f8f8f8;transform:scaleX(1.049);transform-origin:left center;">Top Sldn sw1</div>
<div style="left:1086.5px;top:452.5px;width:29.0px;height:26px;border:1.4px solid #98d8d8;box-sizing:border-box;border-radius:50%;"></div>
<div class="t" style="left:1129px;top:452.5px;font:700 19px/23px 'Liberation Sans',sans-serif;color:#f8f8f8;transform:scaleX(1.033);transform-origin:left center;">Bot sldn sw2</div>
<div style="left:1086.5px;top:501.5px;width:29.0px;height:26px;background:#10e8f0;border-radius:50%;"></div>
<div class="t" style="left:1129px;top:501.5px;font:700 19px/23px 'Liberation Sans',sans-serif;color:#f8f8f8;transform:scaleX(0.998);transform-origin:left center;">Bot sldn sw1</div>
<div style="left:1291.0px;top:160.5px;width:29.0px;height:26px;background:#10e8f0;border-radius:50%;"></div>
<div class="t" style="left:1334px;top:160.5px;font:700 19px/23px 'Liberation Sans',sans-serif;color:#f8f8f8;transform:scaleX(1.057);transform-origin:left center;">M. Therm PTC</div>
<div style="left:1291.0px;top:209.5px;width:29.0px;height:26px;border:1.4px solid #98d8d8;box-sizing:border-box;border-radius:50%;"></div>
<div class="t" style="left:1334px;top:209.5px;font:700 19px/23px 'Liberation Sans',sans-serif;color:#f8f8f8;transform:scaleX(1.068);transform-origin:left center;">Ins Up</div>
<div style="left:1291.0px;top:258.5px;width:29.0px;height:26px;border:1.4px solid #98d8d8;box-sizing:border-box;border-radius:50%;"></div>
<div class="t" style="left:1334px;top:258.5px;font:700 19px/23px 'Liberation Sans',sans-serif;color:#f8f8f8;transform:scaleX(1.068);transform-origin:left center;">Ins Dn</div>
<div style="left:1291.0px;top:307.0px;width:29.0px;height:26px;border:1.4px solid #98d8d8;box-sizing:border-box;border-radius:50%;"></div>
<div class="t" style="left:1334px;top:307.0px;font:700 19px/23px 'Liberation Sans',sans-serif;color:#f8f8f8;transform:scaleX(1.050);transform-origin:left center;">Fire Signal</div>
<div style="left:1291.0px;top:355.5px;width:29.0px;height:26px;border:1.4px solid #98d8d8;box-sizing:border-box;border-radius:50%;"></div>
<div class="t" style="left:1334px;top:355.5px;font:700 19px/23px 'Liberation Sans',sans-serif;color:#f8f8f8;transform:scaleX(1.016);transform-origin:left center;">Fireman op</div>
<div style="left:1291.0px;top:404.0px;width:29.0px;height:26px;background:#10e8f0;border-radius:50%;"></div>
<div class="t" style="left:1334px;top:404.0px;font:700 19px/23px 'Liberation Sans',sans-serif;color:#f8f8f8;transform:scaleX(1.075);transform-origin:left center;">ARD En MPS</div>
<div style="left:1291.0px;top:452.5px;width:29.0px;height:26px;border:1.4px solid #98d8d8;box-sizing:border-box;border-radius:50%;"></div>
<div class="t" style="left:1334px;top:452.5px;font:700 19px/23px 'Liberation Sans',sans-serif;color:#f8f8f8;transform:scaleX(1.066);transform-origin:left center;">ARD FAR</div>
<div style="left:1291.0px;top:501.5px;width:29.0px;height:26px;background:#10e8f0;border-radius:50%;"></div>
<div class="t" style="left:1334px;top:501.5px;font:700 19px/23px 'Liberation Sans',sans-serif;color:#f8f8f8;transform:scaleX(1.096);transform-origin:left center;">ARD RRD</div>
<div style="left:1496.0px;top:160.5px;width:29.0px;height:26px;border:1.4px solid #98d8d8;box-sizing:border-box;border-radius:50%;"></div>
<div style="left:1496.0px;top:209.5px;width:29.0px;height:26px;border:1.4px solid #98d8d8;box-sizing:border-box;border-radius:50%;"></div>
<div class="t" style="left:1538px;top:211.5px;font:700 17px/21px 'Liberation Sans',sans-serif;color:#c4c4c4;transform:scaleX(0.972);transform-origin:left center;">--</div>
<div style="left:1496.0px;top:258.5px;width:29.0px;height:26px;border:1.4px solid #98d8d8;box-sizing:border-box;border-radius:50%;"></div>
<div class="t" style="left:1538px;top:260.5px;font:700 17px/21px 'Liberation Sans',sans-serif;color:#c4c4c4;transform:scaleX(0.972);transform-origin:left center;">--</div>
<div style="left:1496.0px;top:307.0px;width:29.0px;height:26px;border:1.4px solid #98d8d8;box-sizing:border-box;border-radius:50%;"></div>
<div class="t" style="left:1538px;top:309.0px;font:700 17px/21px 'Liberation Sans',sans-serif;color:#c4c4c4;transform:scaleX(0.972);transform-origin:left center;">--</div>
<div style="left:1496.0px;top:355.5px;width:29.0px;height:26px;border:1.4px solid #98d8d8;box-sizing:border-box;border-radius:50%;"></div>
<div class="t" style="left:1538px;top:357.5px;font:700 17px/21px 'Liberation Sans',sans-serif;color:#c4c4c4;transform:scaleX(0.972);transform-origin:left center;">--</div>
<div style="left:1496.0px;top:404.0px;width:29.0px;height:26px;border:1.4px solid #98d8d8;box-sizing:border-box;border-radius:50%;"></div>
<div style="left:1496.0px;top:452.5px;width:29.0px;height:26px;border:1.4px solid #98d8d8;box-sizing:border-box;border-radius:50%;"></div>
<div class="t" style="left:1538px;top:454.5px;font:700 17px/21px 'Liberation Sans',sans-serif;color:#c4c4c4;transform:scaleX(0.972);transform-origin:left center;">--</div>
<div style="left:1496.0px;top:501.5px;width:29.0px;height:26px;border:1.4px solid #98d8d8;box-sizing:border-box;border-radius:50%;"></div>
<div class="t" style="left:1538px;top:501.5px;font:700 19px/23px 'Liberation Sans',sans-serif;color:#f8f8f8;transform:scaleX(1.053);transform-origin:left center;">Earthquake</div>
<div style="left:870px;top:574px;width:572px;height:416px;border:3px solid;border-color:#e2e2e2;box-sizing:border-box;"></div>
<div style="left:882px;top:571px;width:69px;height:8px;background:#000;"></div>
<div class="t" style="left:885px;top:562.5px;font:400 17px/21px 'Liberation Sans',sans-serif;color:#30c830;transform:scaleX(1.041);transform-origin:left center;">Outputs</div>
<div style="left:910px;top:604.5px;width:30px;height:26px;border:1.4px solid #e8e8c4;box-sizing:border-box;border-radius:50%;"></div>
<div class="t" style="left:952px;top:603.5px;font:400 22px/26px 'Liberation Sans',sans-serif;color:#f4f4f4;transform:scaleX(1.116);transform-origin:left center;-webkit-text-stroke:0.5px #f4f4f4;">Run UP</div>
<div style="left:1167.5px;top:604.5px;width:28px;height:26px;border:1.4px solid #e8e8c4;box-sizing:border-box;border-radius:50%;"></div>
<div class="t" style="left:1224px;top:603.5px;font:400 22px/26px 'Liberation Sans',sans-serif;color:#f4f4f4;transform:scaleX(1.108);transform-origin:left center;-webkit-text-stroke:0.5px #f4f4f4;">DC O/P</div>
<div style="left:910px;top:654px;width:30px;height:26px;border:1.4px solid #e8e8c4;box-sizing:border-box;border-radius:50%;"></div>
<div class="t" style="left:952px;top:653.0px;font:400 22px/26px 'Liberation Sans',sans-serif;color:#f4f4f4;transform:scaleX(1.125);transform-origin:left center;-webkit-text-stroke:0.5px #f4f4f4;">Run DN</div>
<div style="left:1167.5px;top:654px;width:28px;height:26px;border:1.4px solid #e8e8c4;box-sizing:border-box;border-radius:50%;"></div>
<div class="t" style="left:1224px;top:653.0px;font:400 22px/26px 'Liberation Sans',sans-serif;color:#f4f4f4;transform:scaleX(1.104);transform-origin:left center;-webkit-text-stroke:0.5px #f4f4f4;">DO O/P</div>
<div style="left:910px;top:703px;width:30px;height:26px;border:1.4px solid #e8e8c4;box-sizing:border-box;border-radius:50%;"></div>
<div class="t" style="left:952px;top:702.0px;font:400 22px/26px 'Liberation Sans',sans-serif;color:#f4f4f4;transform:scaleX(1.167);transform-origin:left center;-webkit-text-stroke:0.5px #f4f4f4;">Speed 1 O/P</div>
<div style="left:1167.5px;top:703px;width:28px;height:26px;border:1.4px solid #e8e8c4;box-sizing:border-box;border-radius:50%;"></div>
<div style="left:910px;top:752px;width:30px;height:26px;border:1.4px solid #e8e8c4;box-sizing:border-box;border-radius:50%;"></div>
<div class="t" style="left:952px;top:751.0px;font:400 22px/26px 'Liberation Sans',sans-serif;color:#f4f4f4;transform:scaleX(1.167);transform-origin:left center;-webkit-text-stroke:0.5px #f4f4f4;">Speed 2 O/P</div>
<div style="left:1167.5px;top:752px;width:28px;height:26px;background:#f4ee20;border-radius:50%;"></div>
<div class="t" style="left:1224px;top:751.0px;font:400 22px/26px 'Liberation Sans',sans-serif;color:#f4f4f4;transform:scaleX(1.169);transform-origin:left center;-webkit-text-stroke:0.5px #f4f4f4;">Brake Sig 1</div>
<div style="left:910px;top:799.5px;width:30px;height:26px;border:1.4px solid #e8e8c4;box-sizing:border-box;border-radius:50%;"></div>
<div class="t" style="left:952px;top:798.5px;font:400 22px/26px 'Liberation Sans',sans-serif;color:#f4f4f4;transform:scaleX(1.195);transform-origin:left center;-webkit-text-stroke:0.5px #f4f4f4;">ARD Relay</div>
<div style="left:1167.5px;top:799.5px;width:28px;height:26px;background:#f4ee20;border-radius:50%;"></div>
<div class="t" style="left:1224px;top:798.5px;font:400 22px/26px 'Liberation Sans',sans-serif;color:#f4f4f4;transform:scaleX(1.169);transform-origin:left center;-webkit-text-stroke:0.5px #f4f4f4;">Brake Sig 2</div>
<div style="left:910px;top:848.5px;width:30px;height:26px;background:#f4ee20;border-radius:50%;"></div>
<div class="t" style="left:952px;top:847.5px;font:400 22px/26px 'Liberation Sans',sans-serif;color:#f4f4f4;transform:scaleX(1.183);transform-origin:left center;-webkit-text-stroke:0.5px #f4f4f4;">CT Relay</div>
<div style="left:1167.5px;top:848.5px;width:28px;height:26px;border:1.4px solid #e8e8c4;box-sizing:border-box;border-radius:50%;"></div>
<div class="t" style="left:1224px;top:847.5px;font:400 22px/26px 'Liberation Sans',sans-serif;color:#f4f4f4;-webkit-text-stroke:0.5px #f4f4f4;">–</div>
<div style="left:910px;top:897.5px;width:30px;height:26px;border:1.4px solid #e8e8c4;box-sizing:border-box;border-radius:50%;"></div>
<div class="t" style="left:952px;top:896.5px;font:400 22px/26px 'Liberation Sans',sans-serif;color:#f4f4f4;transform:scaleX(1.167);transform-origin:left center;-webkit-text-stroke:0.5px #f4f4f4;">Speed 3 O/P</div>
<div style="left:1167.5px;top:897.5px;width:28px;height:26px;border:1.4px solid #e8e8c4;box-sizing:border-box;border-radius:50%;"></div>
<div style="left:910px;top:946px;width:30px;height:26px;background:#f4ee20;border-radius:50%;"></div>
<div class="t" style="left:952px;top:945.0px;font:400 22px/26px 'Liberation Sans',sans-serif;color:#f4f4f4;transform:scaleX(1.150);transform-origin:left center;-webkit-text-stroke:0.5px #f4f4f4;">Main Contact</div>
<div style="left:1167.5px;top:946px;width:28px;height:26px;border:1.4px solid #e8e8c4;box-sizing:border-box;border-radius:50%;"></div>
<div class="t" style="left:1224px;top:945.0px;font:400 22px/26px 'Liberation Sans',sans-serif;color:#f4f4f4;-webkit-text-stroke:0.5px #f4f4f4;">–</div>
<div style="left:1455px;top:574px;width:233px;height:184px;border:3px solid;border-color:#e2e2e2;box-sizing:border-box;"></div>
<div style="left:1468px;top:571px;width:112px;height:8px;background:#000;"></div>
<div class="t" style="left:1471px;top:562.5px;font:400 17px/21px 'Liberation Sans',sans-serif;color:#f0f08c;transform:scaleX(1.068);transform-origin:left center;">Select Model</div>
<div style="left:1484px;top:613px;width:20px;height:20px;background:radial-gradient(circle at 40% 40%,#fff,#e0e0d8 60%,#a0a098);border-radius:50%;"></div>
<div style="left:1484px;top:663px;width:20px;height:20px;background:radial-gradient(circle at 40% 40%,#fff,#e0e0d8 60%,#a0a098);border-radius:50%;"></div>
<div style="left:1489px;top:667px;width:10px;height:9px;background:#080808;border-radius:50%;"></div>
<div class="t" style="left:1516px;top:611.5px;font:400 19px/23px 'Liberation Sans',sans-serif;color:#f4f4f4;transform:scaleX(1.239);transform-origin:left center;-webkit-text-stroke:0.4px #f4f4f4;">TIC3</div>
<div class="t" style="left:1516px;top:660.5px;font:400 19px/23px 'Liberation Sans',sans-serif;color:#f4f4f4;transform:scaleX(1.172);transform-origin:left center;-webkit-text-stroke:0.4px #f4f4f4;">MC4</div>
<div style="left:1538px;top:867px;width:148px;height:47px;background:#ece9d8;border-top:2px solid #fdfdf6;border-left:2px solid #fdfdf6;border-right:2px solid #8c8a7c;border-bottom:2px solid #8c8a7c;box-sizing:border-box;"></div>
<div class="t" style="left:1562px;top:879.0px;font:400 20px/24px 'Liberation Sans',sans-serif;color:#101010;transform:scaleX(1.278);transform-origin:left center;-webkit-text-stroke:0.45px #101010;">Edit I/Os</div>
</div></body></html>
